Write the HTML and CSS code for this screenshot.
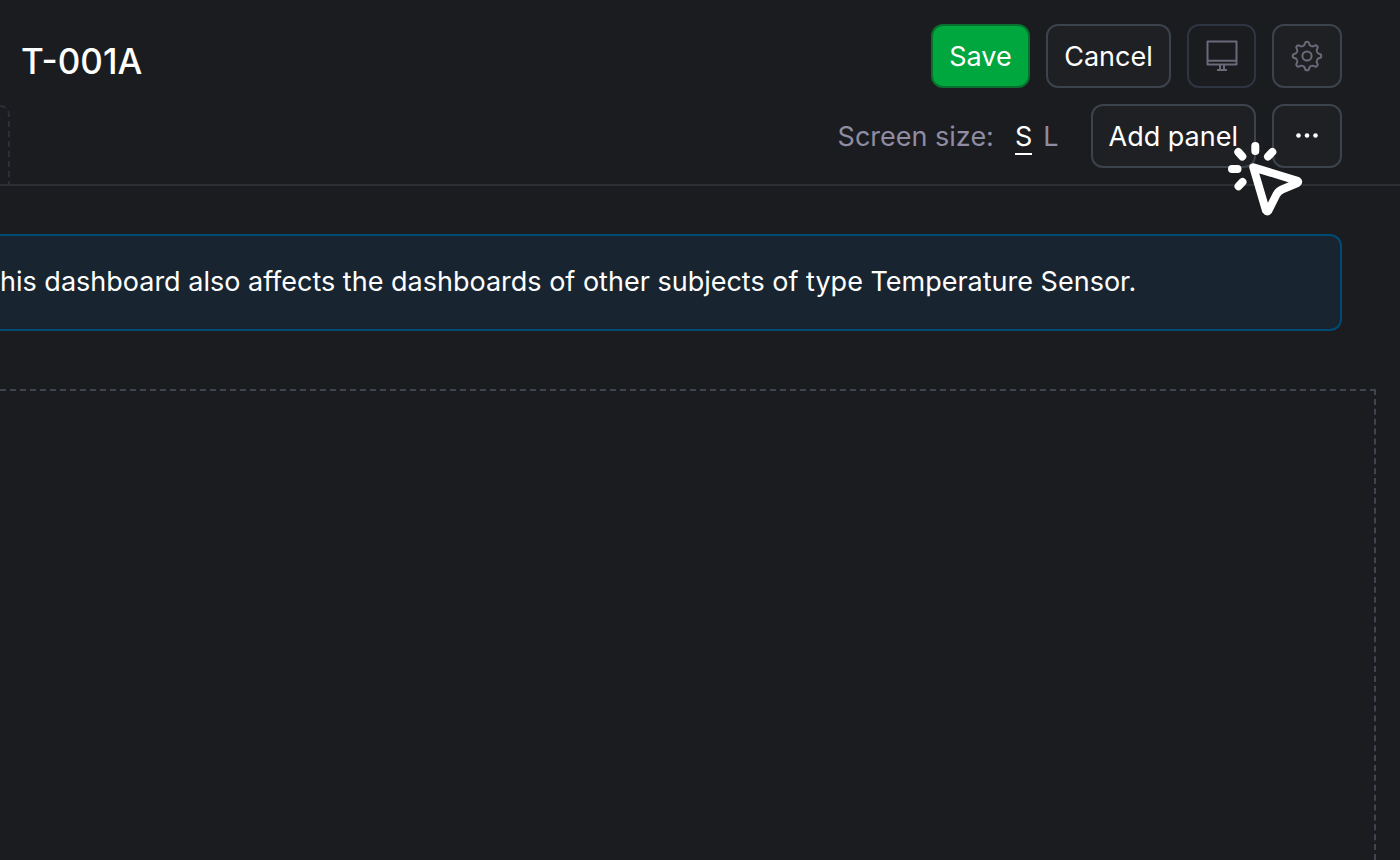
FILE: index.html
```html
<!DOCTYPE html>
<html lang="en">
<head>
<meta charset="utf-8">
<title>T-001A</title>
<link rel="stylesheet" href="styles.css">
</head>
<body>
<header class="header">
  <div class="header-left">
    <h1 class="title">T-001A</h1>
    <div class="tab-drop"></div>
  </div>
  <div class="header-right">
    <div class="row">
      <button class="btn btn-primary" type="button">Save</button>
      <button class="btn btn-cancel" type="button">Cancel</button>
      <button class="btn btn-icon btn-muted" type="button" aria-label="Display">
        <svg class="icon" viewBox="0 0 32 32" fill="none" stroke="currentColor" stroke-width="2" stroke-linejoin="round">
          <path d="M1.500 1.500h29v23h-29zM1.500 20.800h29M14 24.500V30M18 24.500V30M11 30h10"/>
        </svg>
      </button>
      <button class="btn btn-icon" type="button" aria-label="Settings">
        <svg class="icon" viewBox="-16 -16 32 32" fill="none" stroke="currentColor" stroke-width="2">
          <defs><path id="tooth" d="M-4.100-10C-2.800-10.500-2.200-11.200-2-12.600C-1.800-14.800 1.800-14.800 2-12.600C2.200-11.200 2.800-10.500 4.100-10"/></defs>
          <use href="#tooth"/>
          <use href="#tooth" transform="rotate(45)"/>
          <use href="#tooth" transform="rotate(90)"/>
          <use href="#tooth" transform="rotate(135)"/>
          <use href="#tooth" transform="rotate(180)"/>
          <use href="#tooth" transform="rotate(225)"/>
          <use href="#tooth" transform="rotate(270)"/>
          <use href="#tooth" transform="rotate(315)"/>
          <circle r="4.600"/>
        </svg>
      </button>
    </div>
    <div class="row">
      <div class="sizes">
        <span class="sizes-label">Screen size:</span>
        <button class="size size-active" type="button" aria-pressed="true">S</button>
        <button class="size" type="button" aria-pressed="false">L</button>
      </div>
      <div class="add">
        <button class="btn btn-add" type="button">Add panel</button>
        <svg class="pointer" viewBox="0 0 90 90" fill="none" stroke="#fff" stroke-linecap="round" stroke-linejoin="round" aria-hidden="true">
          <path stroke-width="8" d="M35.300 11v5M18.300 17l4 4.500M52.300 17l-4.300 4.500M12 34h5.500M22.500 47l-4 4.300"/>
          <path fill="#1c1d20" stroke-width="8" d="M33.300 32.300L77.500 45.800Q79 46.800 77.500 48L62.500 54.300Q58.500 56 56.500 59.500L48.500 75.500Q47.300 77.300 46 75.500Z"/>
        </svg>
      </div>
      <button class="btn btn-icon btn-more" type="button" aria-label="More">
        <svg class="icon" viewBox="0 0 32 32" fill="currentColor"><circle cx="7.500" cy="15.500" r="2.300"/><circle cx="16" cy="15.500" r="2.300"/><circle cx="24.500" cy="15.500" r="2.300"/></svg>
      </button>
    </div>
  </div>
</header>
<main class="main">
  <p class="notice">his dashboard also affects the dashboards of other subjects of type Temperature Sensor.</p>
  <section class="canvas" aria-label="Panels"></section>
</main>
</body>
</html>
```
FILE: styles.css
```css
* { box-sizing: border-box; }

body {
  margin: 0;
  min-height: 100vh;
  display: flex;
  flex-direction: column;
  background: #1b1c1f;
  color: #fff;
  font-family: Inter, "Liberation Sans", sans-serif;
  font-size: 27px;
  line-height: 32px;
}

.header {
  display: flex;
  justify-content: space-between;
  border-bottom: 2px solid #2b2e33;
}

.header-left {
  display: flex;
  flex-direction: column;
}

.title {
  flex: none;
  margin: 0;
  padding: 40px 0 22px 21px;
  font-size: 35px;
  line-height: 43px;
  font-weight: 500;
}

.tab-drop {
  flex: 1;
  width: 10px;
  border: 2px dashed #2a3038;
  border-width: 2px 2px 0 0;
  border-top-right-radius: 12px;
}

.header-right {
  display: flex;
  flex-direction: column;
  gap: 16px;
  padding: 24px 58px 16px 0;
}

.row {
  display: flex;
  justify-content: flex-end;
  gap: 16px;
}

.btn {
  height: 64px;
  padding: 2px 16px 0;
  display: flex;
  align-items: center;
  justify-content: center;
  border: 2px solid #3c434d;
  border-radius: 12px;
  background: #1f2023;
  color: #fff;
  font: inherit;
  white-space: nowrap;
}

.btn-primary {
  min-width: 99px;
  background: #00a63e;
  border-color: #08702f;
}

.btn-cancel { min-width: 125px; }
.btn-add { min-width: 165px; }

.btn-icon {
  width: 70px;
  padding: 0;
  color: #6c697a;
}

.btn-muted {
  width: 69px;
  background: transparent;
  border-color: #2e3442;
}

.btn-more { color: #fff; }

.icon {
  flex: none;
  width: 32px;
  height: 32px;
}

.sizes {
  display: flex;
  align-items: center;
  margin-right: 16px;
  padding-top: 2px;
  color: #8f8ca3;
}

.sizes-label { margin-right: 21px; }

.size {
  margin-right: 11px;
  padding: 2px 0 0;
  border: 0;
  border-bottom: 2px solid transparent;
  background: none;
  color: inherit;
  font: inherit;
}

.size:last-child { margin-right: 0; }

.size-active {
  border-color: #fff;
  color: #fff;
}

.add { position: relative; }

.pointer {
  position: absolute;
  z-index: 1;
  left: 129px;
  top: 31px;
  width: 90px;
  height: 90px;
  pointer-events: none;
}

.main {
  flex: 1;
  display: flex;
  flex-direction: column;
}

.notice {
  margin: 48px 58px 58px 0;
  padding: 30px 0 31px;
  border: 2px solid #004b73;
  border-left: 0;
  border-radius: 0 12px 12px 0;
  background: #182530;
}

.canvas {
  flex: 1;
  margin-right: 24px;
  border: 2px dashed #40444f;
  border-width: 2px 2px 0 0;
}
```
